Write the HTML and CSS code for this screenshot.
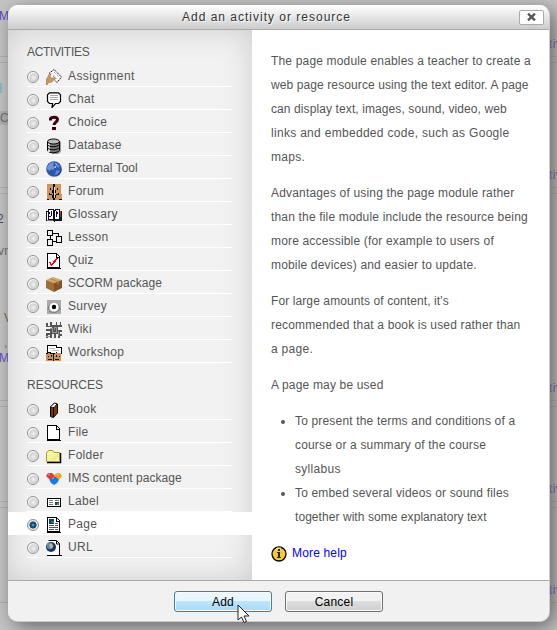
FILE: index.html
```html
<!DOCTYPE html>
<html lang="en">
<head>
<meta charset="utf-8">
<title>Add an activity or resource</title>
<link rel="stylesheet" href="styles.css">
</head>
<body>
<div class="backdrop" aria-hidden="true">
  <div class="course-section s1"><span class="m">M</span><span>tiv</span></div>
  <div class="course-section s2"><span class="frag"><i class="cyan"></i><b class="chip">C</b></span><span>tiv</span></div>
  <div class="course-section s3"><span class="frag"><em>2</em><em>vn</em><em class="v">V</em><em class="comma">,</em><em class="m">M</em></span><span>tiv</span></div>
  <div class="course-section s4"><span></span><span>tiv</span></div>
  <div class="course-section s5"><span></span><span>tiv</span></div>
</div>

<div class="dialog">
  <header class="titlebar"><h1>Add an activity or resource</h1>
    <button class="close" aria-label="Close"><svg width="9" height="8" viewBox="0 0 9 8"><path d="M1 0.7L8 7.3M8 .7L1 7.3" stroke="#555" stroke-width="2.4"/></svg></button>
  </header>
  <main class="content">
    <section class="chooser">
      <h2 class="first">ACTIVITIES</h2>
      <ul>
        <li><i class="radio"></i><svg class="icon" viewBox="0 0 16 16"><path d="M3 4.500l5-4L15.500 8 11 13.500z" fill="#fff"/><path d="M3 4.500l5-4L15.500 8 11 13.500 9 11.500" fill="none" stroke="#000" stroke-dasharray="1.500 .8"/><path d="M6 4.500l5 5M8 3l5 5M7 7l3 3.500" stroke="#777" stroke-dasharray="1 1.200"/><path d="M0 16v-5l1.500-2.500 2-4 1.500.5-1 3.500 2 .5 3-.5 1 1-3 2-1 1.500-3 .5-2 2.500z" fill="#cb9560" stroke="#9a6a40" stroke-width=".5"/></svg><span class="wide">Assignment</span></li>
        <li><i class="radio"></i><svg class="icon" viewBox="0 0 16 16"><path d="M3.500 .8h9l2 2v6.700l-2 2h-3l-3.500 4 .5-4h-3l-2-2V2.800z" fill="#fff" stroke="#000" stroke-width="1.200"/><path d="M4 3.500h8M4 5.500h8M4 7.500h8" stroke="#aaa"/></svg><span>Chat</span></li>
        <li><i class="radio"></i><svg class="icon" viewBox="0 0 16 16"><path d="M4.500 5.500V3.800C5.200 1.800 11.500 1.200 11.500 4.500c0 2.600-3.300 2.500-3.500 5.500" fill="none" stroke="#420008" stroke-width="3"/><path d="M6 12h4v3H6z" fill="#420008"/></svg><span>Choice</span></li>
        <li><i class="radio"></i><svg class="icon" viewBox="0 0 16 16"><path d="M3 4l10-1 2 1v10l-3 2H6z" fill="#999"/><path d="M1.500 3.500v9c1 3 10 3 12 0v-9" fill="#777" stroke="#000"/><path d="M3 5v9" stroke="#ddd" stroke-width="2"/><ellipse cx="7.500" cy="3.500" rx="6" ry="2.500" fill="#bbb" stroke="#000"/><path d="M1.500 6.500c1 3 10 3 12 0M1.500 9.500c1 3 10 3 12 0" fill="none" stroke="#000"/></svg><span>Database</span></li>
        <li><i class="radio"></i><svg class="icon" viewBox="0 0 16 16"><circle cx="8" cy="8" r="7.800" fill="#3157ab"/><path d="M1 6l3-4 4-1-1 4 2 1-2 3-2-1-1 2-3-2z" fill="#6d94dd"/><path d="M10 2l4 3-2 2-2-2zM11 9l3 1-2 3-3 1 1-4z" fill="#5d88d6"/><path d="M9 2l2 1-1 1zM8 6l2-1v2z" fill="#cfe0ff"/><path d="M10 15.500c4-1 6-5 5.500-8-1 4-3 6-5.500 8z" fill="#1f2f77"/></svg><span class="tight">External Tool</span></li>
        <li><i class="radio"></i><svg class="icon crisp" viewBox="0 0 16 16"><path d="M1 0h14v10h1v6H1z" fill="#cc965f"/><path d="M7 0h2v6h1v3H9v2h1v3H9v2H7v-2H6v-3h1V9H6V6h1z" fill="#000"/><path d="M8 3v11" stroke="#e9d5bb"/><path d="M4 4h1v2H4zM11 4h1v2h-1zM3 9h1v1h2v1H3zM12 9h1v2h-3v-1h2zM1 15h2v1H1zM13 15h3v1h-3z" fill="#111"/></svg><span>Forum</span></li>
        <li><i class="radio"></i><svg class="icon crisp" viewBox="0 0 16 16"><path d="M0 4h2V2h5l1 1 1-1h5v2h2v10H9l-1 1-1-1H0z" fill="#111"/><path d="M3 3h3l1 1v8H3zM9 4l1-1h3v9H9zM1 5h1v8H1z" fill="#fff"/><path d="M3 5h1v2H3zM5 4h1v5H5zM3 9h2v1H3zM10 4h1v6h-1zM11 5h1v2h-1z" fill="#00009b"/><path d="M14 4h1v3h-1z" fill="#e22"/><path d="M14 7h1v3h-1z" fill="#080"/><path d="M14 10h1v3h-1z" fill="#119"/><path d="M1 13h6v1H1z" fill="#777"/></svg><span>Glossary</span></li>
        <li><i class="radio"></i><svg class="icon crisp" viewBox="0 0 16 16"><path d="M4.500 6v4M7 3.500h5V7" fill="none" stroke="#000"/><path d="M1.500 .5h5v5h-5zM1.500 9.500h5v6h-5zM10.500 6.500h5v6h-5z" fill="#eee" stroke="#000"/><path d="M7 11.500h3" stroke="#000"/></svg><span>Lesson</span></li>
        <li><i class="radio"></i><svg class="icon crisp" viewBox="0 0 16 16"><path d="M1.500 .5h9l3 3v11h-12z" fill="#fff" stroke="#000"/><path d="M10.500 1v3H14M1 15.500h14" fill="none" stroke="#000"/><path d="M3.500 9l2 3 6-7" fill="none" stroke="#f00" stroke-width="1.600"/></svg><span>Quiz</span></li>
        <li><i class="radio"></i><svg class="icon" viewBox="0 0 16 16"><path d="M0 4l7-3 9 3-8 3z" fill="#d3a867"/><path d="M0 4l8 3v9l-8-4z" fill="#9f6c37"/><path d="M8 7l8-3v8l-8 4z" fill="#835326"/><path d="M4 2.500l8 3v3" stroke="#b98b50" fill="none"/></svg><span class="tight">SCORM package</span></li>
        <li><i class="radio"></i><svg class="icon" viewBox="0 0 16 16"><path d="M1 1h14v14H1z" fill="#aaa"/><path d="M2 11c1-10 11-10 12 0M3 12c3 2 7 2 10-1" fill="none" stroke="#777"/><circle cx="8" cy="8" r="4.500" fill="#fff"/><circle cx="8" cy="8" r="2.200" fill="#000"/></svg><span>Survey</span></li>
        <li><i class="radio"></i><svg class="icon crisp" viewBox="0 0 16 16"><path d="M0 1h2v3h2V0h2v3h4V0h1v3h3V0h1v3h1v2h-4v3h4v2h-2v2h3v2h-3v2h-2v-4h-2v4H8v-4H6v4H4v-3H2v3H0v-5h4V9H0V7h6V5H0z" fill="#555"/><path d="M4 6h2v4h4V5H8v3M0 14h4M12 9v5" stroke="#999" fill="none"/></svg><span>Wiki</span></li>
        <li><i class="radio"></i><svg class="icon crisp" viewBox="0 0 16 16"><path d="M1.500 .5h9v2h5v6h-4l-1-1-1 1H5l-1 1V7.500H1.500z" fill="#fff" stroke="#000"/><path d="M3 3.500h6M6 5.500h7" stroke="#bbb"/><path d="M0 8h3l2 1h3l1-1h6v8H0z" fill="#c9935c"/><path d="M0 8h2v1H0zM2 11h1v1H2zM5 10h1v2H5zM10 10h1v2h-1zM13 11h1v1h-1zM2 14h4v1H2zM9 14h4v1H9zM7 9h1v7H7z" fill="#111"/></svg><span>Workshop</span></li>
      </ul>
      <h2 class="second">RESOURCES</h2>
      <ul>
        <li><i class="radio"></i><svg class="icon" viewBox="0 0 16 16"><path d="M4.500 5l4-4 3 1v9l-4 4.500-3-1z" fill="#7b3b08" stroke="#000"/><path d="M4.500 5l4-4 2.500 1-3.500 4z" fill="#fff" stroke="#000" stroke-width=".8"/><path d="M7.500 5v10" stroke="#000"/></svg><span>Book</span></li>
        <li><i class="radio"></i><svg class="icon crisp" viewBox="0 0 16 16"><path d="M1.500 .5h9l3 3v11h-12z" fill="#fff" stroke="#000"/><path d="M10.500 1v3H14M1 15.500h14" fill="none" stroke="#000"/></svg><span>File</span></li>
        <li><i class="radio"></i><svg class="icon" viewBox="0 0 16 16"><path d="M1 14.500h13.500V5" stroke="#000" fill="none" stroke-width="1.500"/><path d="M.5 5l2-2.500h4l1.500 2h5.500v9H.5z" fill="#f8f39a" stroke="#a39a38"/><path d="M5 12l7-6M8 12l4-4" stroke="#e2ce78" stroke-dasharray="1 1"/><path d="M1 5.500h12" stroke="#fffde0"/></svg><span>Folder</span></li>
        <li><i class="radio"></i><svg class="icon" viewBox="0 0 16 16"><path d="M0 5l2-3h4l3 3-2 4H4z" fill="#e93b32"/><path d="M8 4l3-2h3l2 3-3 4h-3z" fill="#f7a521"/><path d="M3.500 9l3-3h3.500l3 3-2 3-3 2-3-2z" fill="#1978e9"/><path d="M2 4l2-1M11 4l1-1M6 8l2-1" stroke="#fff" stroke-opacity=".5"/></svg><span class="tight">IMS content package</span></li>
        <li><i class="radio"></i><svg class="icon crisp" viewBox="0 0 16 16"><path d="M1.500 4.500h13v8h-13z" fill="#fff" stroke="#000"/><path d="M3 6.500h4M3 8.500h4M3 10.500h4M9 6.500h4" stroke="#777"/><path d="M9 8h4v3H9z" fill="#246"/><path d="M11 9h2v2h-2z" fill="#486"/></svg><span>Label</span></li>
        <li class="selected"><i class="radio on"></i><svg class="icon crisp" viewBox="0 0 16 16"><path d="M1.500 .5h9l3 3v11h-12z" fill="#fff" stroke="#000"/><path d="M10.500 1v3H14M1 15.500h14" fill="none" stroke="#000"/><path d="M3 2h5v5H3z" fill="#123f68"/><path d="M5 4h3v2H5z" fill="#287566"/><path d="M9 6.500h3M3 8.500h5M9 8.500h3M3 10.500h9M3 12.500h5M9 12.500h3" stroke="#555"/></svg><span>Page</span></li>
        <li><i class="radio"></i><svg class="icon" viewBox="0 0 16 16"><path d="M2.500 .5h8l3 3v12h-12" fill="#fff" stroke="#000"/><path d="M10.500 1v3H14M1 15.500h15" fill="none" stroke="#000"/><circle cx="5" cy="7" r="5" fill="#173565"/><circle cx="4" cy="6" r="3.300" fill="#5687bd"/><path d="M3 5l2-2 2 3-2 3z" fill="#c8b781"/></svg><span>URL</span></li>
      </ul>
    </section>
    <section class="help">
      <p><span>The page module enables a teacher to create a</span><span class="t1">web page resource using the text editor. A page</span><span class="t1">can display text, images, sound, video, web</span><span class="t3">links and embedded code, such as Google</span><span class="t3">maps.</span></p>
      <p><span>Advantages of using the page module rather</span><span>than the file module include the resource being</span><span>more accessible (for example to users of</span><span>mobile devices) and easier to update.</span></p>
      <p><span class="t1">For large amounts of content, it's</span><span>recommended that a book is used rather than</span><span class="t3">a page.</span></p>
      <p><span>A page may be used</span></p>
      <ul>
        <li><span>To present the terms and conditions of a</span><span>course or a summary of the course</span><span class="t3">syllabus</span></li>
        <li><span>To embed several videos or sound files</span><span class="t0">together with some explanatory text</span></li>
      </ul>
      <a class="more"><svg width="16" height="16" viewBox="0 0 16 16"><circle cx="8" cy="8" r="7" fill="#fdc92b" stroke="#000" stroke-width="1.300"/><path d="M4 4l2-2h4" stroke="#ffef9b" fill="none"/><path d="M7 3h2v2H7zM6 6h3v5h1v1H6v-1h1V7H6z" fill="#222"/></svg><span>More help</span></a>
    </section>
  </main>
  <footer class="actions"><button class="btn add">Add</button><button class="btn">Cancel</button></footer>
</div>
<svg class="cursor" width="13" height="20" viewBox="0 0 13 20"><path d="M1 1v15l3.500-3 2.500 5.500 2.500-1-2.500-5.500H12z" fill="#fff" stroke="#222" stroke-width="1"/></svg>
</body>
</html>
```

FILE: styles.css
```css
* { box-sizing: border-box; }
body {
  margin: 0;
  width: 557px;
  height: 630px;
  overflow: hidden;
  position: relative;
  padding: 5px 8px 9px;
  background: #c5c5c5;
  font: 12px/24px "Liberation Sans", Arial, sans-serif;
  letter-spacing: 0.3px;
  color: #555;
}
h1, h2, p, ul { margin: 0; padding: 0; font-weight: normal; }
em, b, i { font-style: normal; font-weight: normal; }

/* Dimmed course page behind the dialog */
.backdrop { position: absolute; inset: 0; overflow: hidden; color: #4e46b5; line-height: 14px; }
.course-section {
  display: flex;
  justify-content: space-between;
  align-items: flex-end;
  border-bottom: 1px solid #b0b0b0;
  padding-bottom: 5px;
  width: 562px;
}
.course-section + .course-section { border-top: 1px solid #b0b0b0; margin-top: 5px; }
.s1 { height: 57px; }
.s2 { height: 126px; }
.s3 { height: 208px; }
.s4, .s5 { height: 96px; }
.s1 .m { padding-bottom: 28px; }
.frag { display: flex; flex-direction: column; height: 100%; color: #666; }
.frag .m { color: #5547c8; margin-top: 1px; }
.m { margin-left: -1px; }
.s3 .frag em:nth-child(1) { margin: 18px 0 0 -3px; color: #446; }
.s3 .frag em:nth-child(2) { margin-top: 18px; margin-left: -2px; }
.s3 .frag .v { margin: 53px 0 0 4px; color: #654; }
.s3 .frag .comma { margin: 11px 0 0 4px; }
.cyan { width: 2px; height: 10px; margin-top: 20px; background: #8bc; }
.chip { margin-top: 18px; width: 12px; background: #b0b0b0; }

.dialog {
  position: relative;
  width: 542px;
  height: 617px;
  display: flex;
  flex-direction: column;
  overflow: hidden;
  border: 1px solid #ccc;
  border-width: 0 1px 1px 0;
  border-radius: 10px;
  background: #f1f1f1;
  box-shadow: 5px 5px 20px #666;
}
.titlebar {
  height: 25px;
  flex: none;
  display: flex;
  align-items: center;
  justify-content: flex-end;
  padding-right: 5px;
  background: linear-gradient(#fff, #ccc);
  border-bottom: 1px solid #aaa;
}
.titlebar h1 {
  flex: 1;
  padding-left: 6px;
  text-align: center;
  font-size: 12px;
  letter-spacing: 1px;
  color: #333;
  text-shadow: 1px 1px 1px #fff;
}
.close {
  width: 25px;
  height: 15px;
  display: grid;
  place-items: center;
  padding: 0;
  background: #fff;
  border: 1px solid #aaa;
  border-radius: 2px;
}
.content { display: flex; height: 550px; }
.chooser {
  width: 244px;
  padding: 10px 0 0;
  background: #f2f2f2;
  box-shadow: inset 0 0 30px #ccc;
}
.chooser h2 { height: 24px; padding-left: 19px; font-size: 12px; letter-spacing: 0; }
.chooser .first { letter-spacing: -0.3px; }
.chooser .second { height: 34px; padding-top: 10px; }
.chooser ul { list-style: none; }
.chooser li { height: 23px; padding: 0 20px 0 19px; display: flex; align-items: center; position: relative; }
.chooser li span { flex: 1; height: 23px; padding-left: 6px; border-bottom: 1px solid #fff; }
.chooser li .wide { letter-spacing: 0.4px; }
.chooser li .tight { letter-spacing: 0.05px; }
.chooser li .radio, .chooser li .icon { margin-top: 3px; }
.chooser li::after { content: ""; position: absolute; left: 19px; bottom: 0; width: 41px; height: 1px; background: #fff; }
.chooser .selected { background: #fff; }
.radio {
  width: 12px;
  height: 12px;
  flex: none;
  border: 1px solid #8e8f8f;
  border-radius: 50%;
  background: radial-gradient(circle at 55% 55%, #f2f2f2, #cfcfcf 48%, #fbfbfb 60%);
}
.radio.on { background: radial-gradient(circle, #6ed3f5 0, #12618f 20%, #153c65 45%, #e8e8e8 55%); }
.icon { width: 16px; height: 16px; flex: none; margin-left: 7px; }
.crisp { shape-rendering: crispEdges; }
.help { flex: 1; background: #fff; padding: 19px 0 0 19px; white-space: nowrap; letter-spacing: 0.17px; }
.help p { margin-bottom: 12px; }
.help p span, .help li span { display: block; }
.help ul { padding-left: 24px; }
.t0 { letter-spacing: 0.06px; }
.t1 { letter-spacing: 0.1px; }
.t3 { letter-spacing: 0.3px; }
.more { display: flex; gap: 5px; margin-top: 12px; color: #00f; }
.more svg { margin-top: 5px; }
.actions {
  flex: 1;
  display: flex;
  gap: 13px;
  padding: 10px 0 0 166px;
  border-top: 1px solid #aaa;
  background: #f1f1f1;
}
.btn {
  width: 98px;
  height: 21px;
  padding: 0;
  font: inherit;
  line-height: 18px;
  letter-spacing: .2px;
  color: #000;
  border: 1px solid #707070;
  border-radius: 3px;
  background: linear-gradient(#f2f2f2 50%, #ddd 50%, #cfcfcf);
  box-shadow: inset 0 0 0 1px #fafafa;
}
.btn.add { border-color: #3c7fb1; background: linear-gradient(#eaf6fd 50%, #bee6fd 50%, #a7d9f5); }
.cursor { position: absolute; left: 237px; top: 604px; }
```
